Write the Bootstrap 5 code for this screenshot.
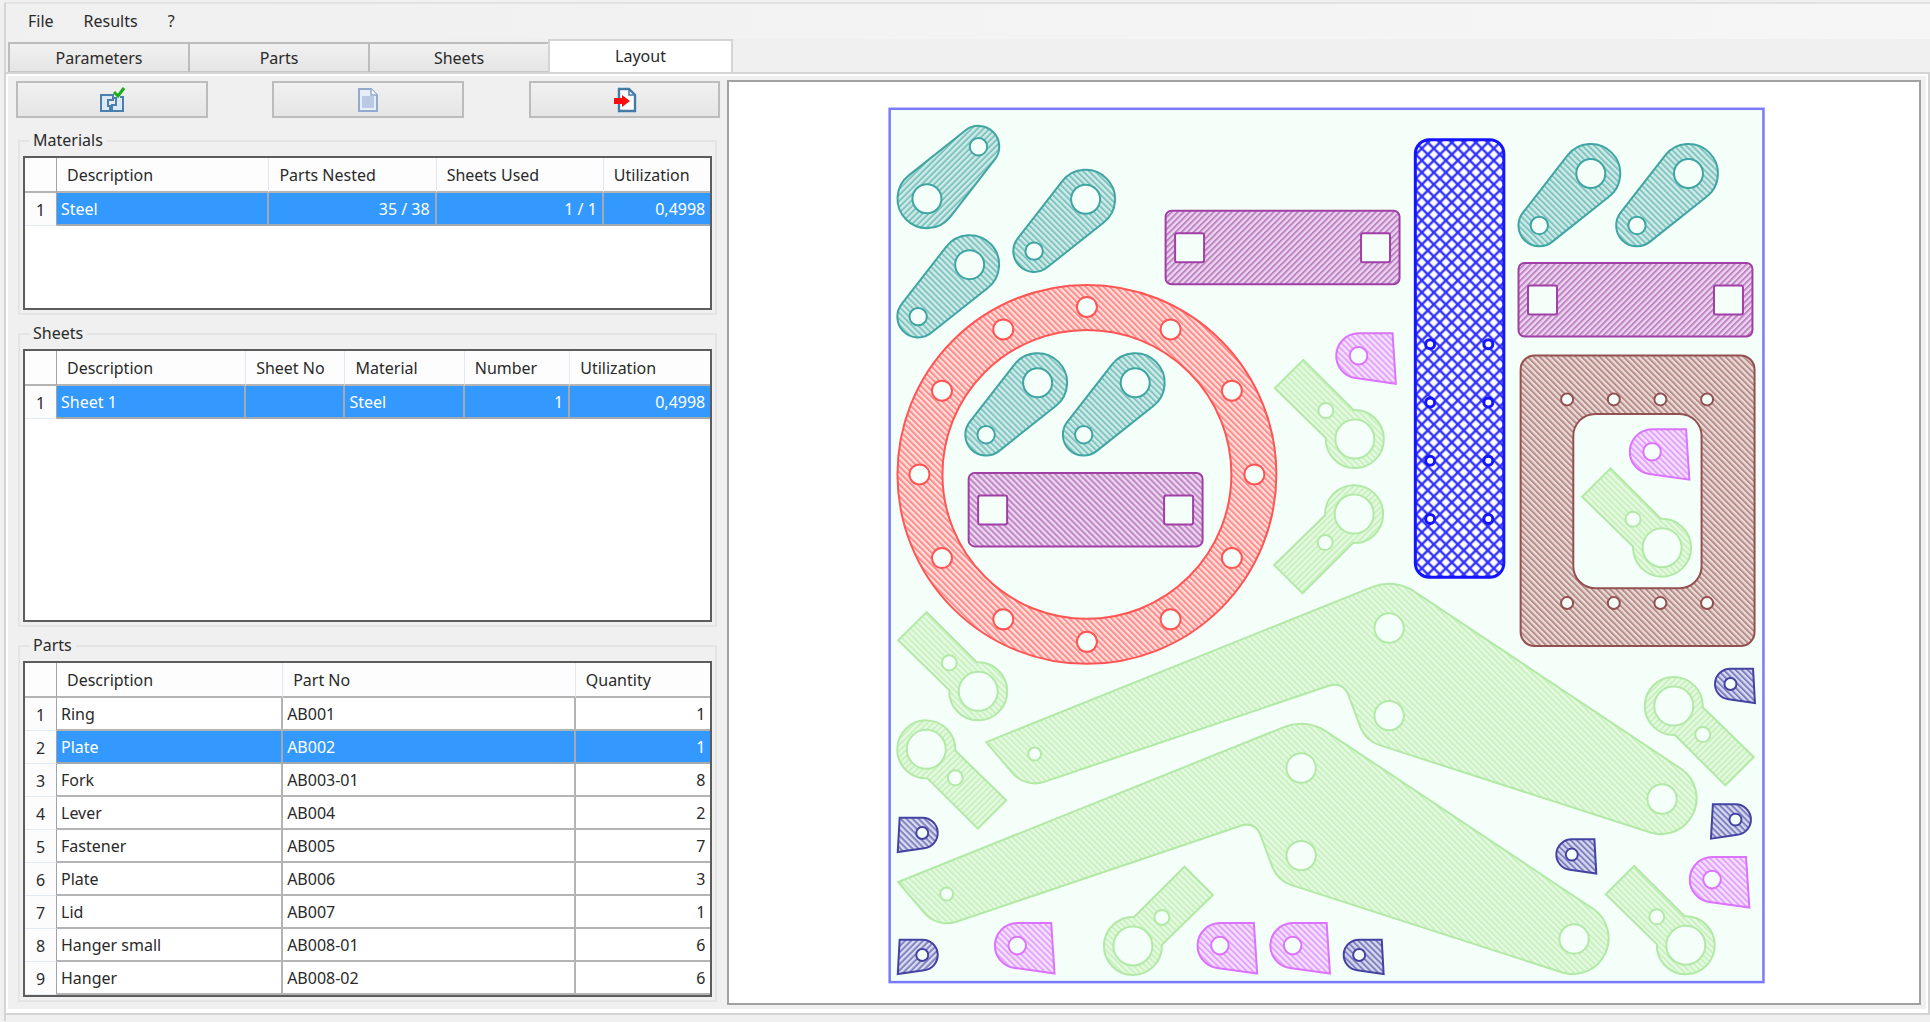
<!DOCTYPE html>
<html lang="en">
<head>
<meta charset="utf-8">
<meta name="viewport" content="width=device-width, initial-scale=1">
<title>Nesting layout</title>
<link rel="stylesheet" href="https://cdn.jsdelivr.net/npm/bootstrap@5.3.0/dist/css/bootstrap.min.css">
<style>
body{background:#f0f0f0;color:#2a2a2a;font-family:"Noto Sans","Open Sans",sans-serif;font-size:16px;line-height:22px}
.app-frame{margin:2px 0 0 4px;border-left:2px solid #d4d4d4;border-top:2px solid #e2e2e2}
.menu-strip{height:35px;background:linear-gradient(90deg,#f0f0f0,#f6f6f6);padding-left:12px}
.menu-strip a{color:#2a2a2a;text-decoration:none;padding:6px 10px 7px;margin-right:10px}
.tab-strip{padding-left:2px;border:0;height:35px;align-items:flex-end}
.tab-strip .nav-link{width:180px;height:31px;margin:0 0 1px;border:2px solid #bdbdbd;border-bottom:2px solid #c8c8c8;border-right-width:0;border-radius:0;background:linear-gradient(#f1f1f1,#e5e5e5);color:#2a2a2a;padding:0;line-height:28px}
.tab-strip .nav-link.active{width:185px;height:35px;margin:0;background:#fff;border:2px solid #d4d4d4;border-bottom:0;color:#2a2a2a;line-height:28px;padding-bottom:3px}
.tab-page{border:2px solid #fff;border-bottom-width:4px;margin-right:2px;box-shadow:0 0 0 2px #d4d4d4;margin-bottom:8px;padding:4px 5px 4px 0}
.side{flex:0 0 37.6%;padding:1px 7px 0 8px}
.tool{flex:0 0 27.2%;height:37px;border:2px solid #bcbcbc;border-radius:0;background:linear-gradient(#f1f1f1,#e5e5e5);padding:0}
.tool svg{display:block;margin:0 auto}
.group-box{border:2px solid #e4e4e4;margin:18px 3px 0 2px;padding:0 3px 3px 3px}
.group-box h2{font-size:16px;line-height:22px;font-weight:400;margin:-13px 0 5px 6px;padding:0 4px;background:#f0f0f0;width:max-content}
.grid-view{border:2px solid #5c5c5c;background:#fff}
.grid-view table{width:100%;table-layout:fixed;border-collapse:separate;border-spacing:0}
.grid-view th,.grid-view td{height:33px;padding:1px 5px 0 4px;border-right:2px solid #b4b4b4;border-bottom:2px solid #b4b4b4;font-weight:400;overflow:hidden;white-space:nowrap}
.grid-view thead th{background:#fdfdfd;border-right:1px solid #e3eaf4;padding-left:10px;height:35px}
.grid-view thead th:first-child,.grid-view tbody th{border-right:1px solid #a4a4a4}
.grid-view tbody th{padding:2px 0 0;text-align:center;background:#fcfcfd;border-bottom:1px solid #e3eaf4}
.grid-view tr>:last-child{border-right:0}
.grid-view .num{text-align:right}
.grid-view .picked td{background:#3399ff;color:#fff;border-color:#a2a9b0}
.c-row{width:32px}
.mat{min-height:154px}.par{min-height:335px}.sht{min-height:273px}
.canvas-pane{border:2px solid #a2a2a2;background:#fff;min-width:0}
.canvas-pane svg{display:block;width:100%;height:auto}
.part{stroke:currentColor;stroke-width:2}
.hole{fill:#f5fffa;stroke:currentColor;stroke-width:2}
.teal{color:#3fa5a3;fill:url(#hTeal)}.teal.alt{fill:url(#hTealB)}
.purple{color:#a03fa5;fill:url(#hPurple)}.purple.alt{fill:url(#hPurpleB)}
.green{color:#b2e9a6;fill:url(#hGreen)}.green.alt{fill:url(#hGreenB)}
.pink{color:#dc73ff;fill:url(#hPink)}
.navy{color:#4343a2;fill:url(#hNavy)}.navy.alt{fill:url(#hNavyB)}
.ring{color:#ff5555;fill:url(#hRed)}
.brown{color:#935050;fill:url(#hBrown)}
</style>
<script src="https://cdn.jsdelivr.net/npm/bootstrap@5.3.0/dist/js/bootstrap.bundle.min.js"></script>
</head>
<body>
<div class="app-frame d-flex flex-column">
  <nav class="menu-strip d-flex align-items-center" aria-label="Main menu"><a href="#">File</a><a href="#">Results</a><a href="#">?</a></nav>
  <ul class="nav nav-tabs tab-strip" role="tablist">
    <li class="nav-item"><button class="nav-link" type="button" role="tab">Parameters</button></li>
    <li class="nav-item"><button class="nav-link" type="button" role="tab">Parts</button></li>
    <li class="nav-item"><button class="nav-link" type="button" role="tab">Sheets</button></li>
    <li class="nav-item"><button class="nav-link active" type="button" role="tab" aria-selected="true">Layout</button></li>
  </ul>
  <main class="tab-page d-flex align-items-stretch">
    <div class="side d-flex flex-column">
      <div class="d-flex justify-content-between mb-1">
        <button class="btn tool" type="button" aria-label="Run nesting"><svg width="26" height="28" viewBox="0 0 26 28" fill="none"><path d="M2 9h12v5h-5v6h2v5h-9z" fill="#dce9f4" stroke="#4a80ad" stroke-width="2"/><path d="M14 12h3v7h-4v6h11V11h-3" fill="#dce9f4" stroke="#4a80ad" stroke-width="2"/><path d="M15 6l4 4 6-8" stroke="#18b018" stroke-width="3"/></svg></button>
        <button class="btn tool" type="button" aria-label="Report"><svg width="22" height="26" viewBox="0 0 22 26"><path d="M2 2h12l6 6v16H2z" fill="#e8eef8" stroke="#93a9cf" stroke-width="2"/><path d="M5 9h12v12H5z" fill="#b9c9e6"/><path d="M14 2v6h6" fill="#fff" stroke="#93a9cf" stroke-width="1.5"/></svg></button>
        <button class="btn tool" type="button" aria-label="Export"><svg width="26" height="26" viewBox="0 0 26 26"><path d="M7 2h10l6 6v16H7z" fill="#fff" stroke="#447aa6" stroke-width="2.4"/><path d="M17 2v6h6" fill="none" stroke="#447aa6" stroke-width="1.5"/><path d="M2 11h8V8l8 6-8 6v-3H2z" fill="#fc0d0d"/></svg></button>
      </div>

      <section class="group-box">
        <h2>Materials</h2>
        <div class="grid-view mat">
          <table>
            <colgroup><col class="c-row"><col style="width:31%"><col style="width:24.4%"><col style="width:24.4%"><col></colgroup>
            <thead><tr><th></th><th>Description</th><th>Parts Nested</th><th>Sheets Used</th><th>Utilization</th></tr></thead>
            <tbody><tr class="picked"><th>1</th><td>Steel</td><td class="num">35 / 38</td><td class="num">1 / 1</td><td class="num">0,4998</td></tr></tbody>
          </table>
        </div>
      </section>

      <section class="group-box">
        <h2>Sheets</h2>
        <div class="grid-view sht">
          <table>
            <colgroup><col class="c-row"><col style="width:27.6%"><col style="width:14.5%"><col style="width:17.4%"><col style="width:15.4%"><col></colgroup>
            <thead><tr><th></th><th>Description</th><th>Sheet No</th><th>Material</th><th>Number</th><th>Utilization</th></tr></thead>
            <tbody><tr class="picked"><th>1</th><td>Sheet 1</td><td></td><td>Steel</td><td class="num">1</td><td class="num">0,4998</td></tr></tbody>
          </table>
        </div>
      </section>

      <section class="group-box">
        <h2>Parts</h2>
        <div class="grid-view par">
          <table>
            <colgroup><col class="c-row"><col style="width:33%"><col style="width:42.7%"><col></colgroup>
            <thead><tr><th></th><th>Description</th><th>Part No</th><th>Quantity</th></tr></thead>
            <tbody>
              <tr><th>1</th><td>Ring</td><td>AB001</td><td class="num">1</td></tr>
              <tr class="picked"><th>2</th><td>Plate</td><td>AB002</td><td class="num">1</td></tr>
              <tr><th>3</th><td>Fork</td><td>AB003-01</td><td class="num">8</td></tr>
              <tr><th>4</th><td>Lever</td><td>AB004</td><td class="num">2</td></tr>
              <tr><th>5</th><td>Fastener</td><td>AB005</td><td class="num">7</td></tr>
              <tr><th>6</th><td>Plate</td><td>AB006</td><td class="num">3</td></tr>
              <tr><th>7</th><td>Lid</td><td>AB007</td><td class="num">1</td></tr>
              <tr><th>8</th><td>Hanger small</td><td>AB008-01</td><td class="num">6</td></tr>
              <tr><th>9</th><td>Hanger</td><td>AB008-02</td><td class="num">6</td></tr>
            </tbody>
          </table>
        </div>
      </section>
    </div>

    <div class="canvas-pane flex-fill">
      <svg viewBox="729 81.5 1190 921" role="img" aria-label="Nested sheet">
        <defs>
          <pattern id="hTeal" width="4.243" height="8" patternUnits="userSpaceOnUse" patternTransform="rotate(-45)"><path d="M0 0h5v8H0z" fill="#d3ebe8"/><path d="M0 0h2v8H0z" fill="#7fc5c1"/></pattern>
          <pattern id="hTealB" href="#hTeal" patternTransform="rotate(45)"/>
          <pattern id="hPurple" width="4.243" height="8" patternUnits="userSpaceOnUse" patternTransform="rotate(-45)"><path d="M0 0h5v8H0z" fill="#ead9ec"/><path d="M0 0h2v8H0z" fill="#c283c8"/></pattern>
          <pattern id="hPurpleB" href="#hPurple" patternTransform="rotate(45)"/>
          <pattern id="hGreen" width="4.243" height="8" patternUnits="userSpaceOnUse" patternTransform="rotate(-45)"><path d="M0 0h5v8H0z" fill="#e6fae3"/><path d="M0 0h2v8H0z" fill="#c8f1be"/></pattern>
          <pattern id="hGreenB" href="#hGreen" patternTransform="rotate(45)"/>
          <pattern id="hPink" width="4.243" height="8" patternUnits="userSpaceOnUse" patternTransform="rotate(-45)"><path d="M0 0h5v8H0z" fill="#f3e3fd"/><path d="M0 0h2v8H0z" fill="#e4a2fc"/></pattern>
          <pattern id="hNavy" width="4.243" height="8" patternUnits="userSpaceOnUse" patternTransform="rotate(-45)"><path d="M0 0h5v8H0z" fill="#d9dcee"/><path d="M0 0h2v8H0z" fill="#7f82c2"/></pattern>
          <pattern id="hNavyB" href="#hNavy" patternTransform="rotate(45)"/>
          <pattern id="hRed" width="4.243" height="8" patternUnits="userSpaceOnUse" patternTransform="rotate(-45)"><path d="M0 0h5v8H0z" fill="#fbdedb"/><path d="M0 0h2v8H0z" fill="#ff8c8a"/></pattern>
          <pattern id="hBrown" width="4.243" height="8" patternUnits="userSpaceOnUse" patternTransform="rotate(-45)"><path d="M0 0h5v8H0z" fill="#e8dcd9"/><path d="M0 0h2v8H0z" fill="#b98c89"/></pattern>
          <pattern id="cross" x="1416" y="148" width="12" height="12" patternUnits="userSpaceOnUse"><path d="M0 0h12v12H0z" fill="#fff"/><path d="M-1 7L7-1M5-1L13 7M-1 5L7 13M5 13L13 5" stroke="#3030ff" stroke-width="2.3"/></pattern>

          <g id="fork"><path class="part" d="M-23.3-18.1A29.5 29.5 0 1 1 18.1 23.3L-38.7 68.4A20.8 20.8 0 0 1-67.9 39.2Z"/><circle class="hole" r="14.5"/><circle class="hole" cx="-51.5" cy="52" r="8.7"/></g>
          <g id="bar"><rect class="part" width="234" height="73.5" rx="6"/><rect class="hole" x="9.5" y="22.5" width="29" height="29" rx="2"/><rect class="hole" x="195.5" y="22.5" width="29" height="29" rx="2"/></g>
          <g id="fastener"><path class="part" d="M-1.2-29L-51.6-79.3-80-51-29-1.2A29 29 0 1 0-1.2-29Z"/><circle class="hole" r="19.5"/><circle class="hole" cx="-29" cy="-28.5" r="7.5"/></g>
          <g id="hanger"><path class="part" d="M0-22.5H34L37.3 28-2.8 22.3A22.5 22.5 0 0 1 0-22.5Z"/><circle class="hole" r="8.8"/></g>
          <g id="small"><path class="part" d="M0-15.3H22.6L24.5 19-1.9 15.2A15.3 15.3 0 0 1 0-15.3Z"/><circle class="hole" r="6"/></g>
          <g id="lever"><path class="part" d="M898.3 881.7L924 912A29.5 29.5 0 0 0 956.3 921.5L1241.7 825.2Q1254 821.5 1260 833L1272.6 867A31 31 0 0 0 1291.8 884.8L1563.4 972.5A35.8 35.8 0 0 0 1594 909L1325.8 730.7A44.4 44.4 0 0 0 1284.8 726.5Z"/><circle class="hole" cx="1301.3" cy="767.7" r="14.7"/><circle class="hole" cx="1301.3" cy="855.3" r="14.7"/><circle class="hole" cx="1574.3" cy="938.7" r="14.7"/><circle class="hole" cx="946.7" cy="893.7" r="6.5"/></g>
        </defs>

        <rect x="889.7" y="108.3" width="874" height="873.5" fill="#f5fffa" stroke="#7a7aff" stroke-width="2.5"/>

        <!-- ring -->
        <g class="ring">
          <circle class="part" cx="1087" cy="474" r="189.5"/><circle class="hole" cx="1087" cy="474" r="144.5"/>
          <circle class="hole" cx="1254.5" cy="474" r="10"/><circle class="hole" cx="1232" cy="557.7" r="10"/><circle class="hole" cx="1170.7" cy="619" r="10"/><circle class="hole" cx="1087" cy="641.5" r="10"/><circle class="hole" cx="1003.3" cy="619" r="10"/><circle class="hole" cx="942" cy="557.7" r="10"/><circle class="hole" cx="919.5" cy="474" r="10"/><circle class="hole" cx="942" cy="390.3" r="10"/><circle class="hole" cx="1003.3" cy="329" r="10"/><circle class="hole" cx="1087" cy="306.5" r="10"/><circle class="hole" cx="1170.7" cy="329" r="10"/><circle class="hole" cx="1232" cy="390.3" r="10"/>
        </g>

        <!-- forks -->
        <g class="teal alt"><use href="#fork" transform="translate(927 198.2) rotate(180)"/></g>
        <g class="teal">
          <use href="#fork" x="1085.7" y="198.7"/><use href="#fork" x="969.7" y="264.2"/><use href="#fork" x="1037.7" y="382.3"/><use href="#fork" x="1135.3" y="382.3"/><use href="#fork" x="1591" y="173"/><use href="#fork" x="1688.7" y="173"/>
        </g>

        <!-- drilled bars -->
        <g class="purple alt"><use href="#bar" x="1165.7" y="210.3"/><use href="#bar" x="1518.7" y="262.5"/></g>
        <g class="purple"><use href="#bar" x="968.7" y="472.5"/></g>

        <!-- selected plate -->
        <g fill="url(#cross)" stroke="#1414ff" stroke-width="3">
          <rect x="1415.5" y="139.3" width="88.5" height="437.5" rx="14"/>
          <g fill="#fff"><circle cx="1430.3" cy="343.7" r="4.5"/><circle cx="1488.5" cy="343.7" r="4.5"/><circle cx="1430.3" cy="402" r="4.5"/><circle cx="1488.5" cy="402" r="4.5"/><circle cx="1430.3" cy="460.3" r="4.5"/><circle cx="1488.5" cy="460.3" r="4.5"/><circle cx="1430.3" cy="518.5" r="4.5"/><circle cx="1488.5" cy="518.5" r="4.5"/></g>
        </g>

        <!-- lid -->
        <g class="brown">
          <rect class="part" x="1520.8" y="355" width="234" height="290.7" rx="14"/><rect class="hole" x="1573.5" y="413.5" width="128.3" height="174.3" rx="22"/>
          <circle class="hole" cx="1567.3" cy="399" r="6"/><circle class="hole" cx="1614" cy="399" r="6"/><circle class="hole" cx="1660.6" cy="399" r="6"/><circle class="hole" cx="1707.3" cy="399" r="6"/>
          <circle class="hole" cx="1567.3" cy="602.7" r="6"/><circle class="hole" cx="1614" cy="602.7" r="6"/><circle class="hole" cx="1660.6" cy="602.7" r="6"/><circle class="hole" cx="1707.3" cy="602.7" r="6"/>
        </g>

        <!-- levers and fasteners -->
        <g class="green">
          <use href="#lever"/><use href="#lever" x="88" y="-140"/>
          <use href="#fastener" x="978.3" y="691"/><use href="#fastener" x="1355" y="438.7"/><use href="#fastener" x="1686" y="945"/><use href="#fastener" x="1662.3" y="547.3"/>
          <use href="#fastener" transform="translate(1354.3 513.7) scale(1 -1)"/>
        </g>
        <g class="green alt">
          <use href="#fastener" transform="translate(926.3 749) rotate(180)"/><use href="#fastener" transform="translate(1674 705.7) rotate(180)"/><use href="#fastener" transform="translate(1133 945.7) scale(-1 1)"/>
        </g>

        <!-- hangers -->
        <g class="pink"><use href="#hanger" x="1017.3" y="945.3"/><use href="#hanger" x="1220" y="945.3"/><use href="#hanger" x="1292.8" y="945.3"/><use href="#hanger" x="1712.3" y="879.3"/><use href="#hanger" x="1652.3" y="451.3"/><use href="#hanger" x="1358.7" y="355.3"/></g>
        <g class="navy"><use href="#small" x="1572" y="854.3"/><use href="#small" x="1730.7" y="683.7"/><use href="#small" x="1359.3" y="954.7"/><use href="#small" transform="translate(922.3 954.7) scale(-1 1)"/></g>
        <g class="navy alt"><use href="#small" transform="translate(922.3 832.7) scale(-1 1)"/><use href="#small" transform="translate(1735.7 819.3) scale(-1 1)"/></g>
      </svg>
    </div>
  </main>
</div>
</body>
</html>
